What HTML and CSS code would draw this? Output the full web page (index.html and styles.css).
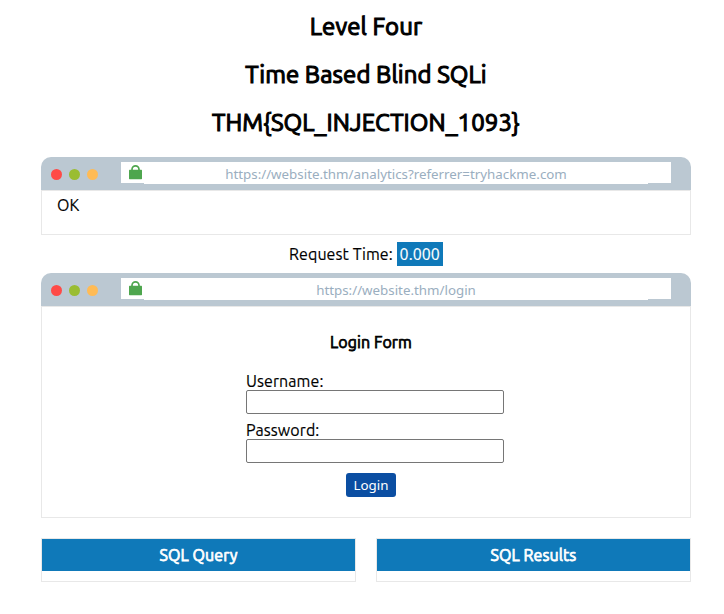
FILE: index.html
```html
<!DOCTYPE html>
<html lang="en">
<head>
<meta charset="utf-8">
<title>Level Four</title>
<link rel="stylesheet" href="styles.css">
</head>
<body>
<main class="page">
  <header class="titles">
    <h1>Level Four</h1>
    <h1>Time Based Blind SQLi</h1>
    <h1>THM{SQL_INJECTION_1093}</h1>
  </header>

  <section class="browser">
    <div class="bar">
      <i class="dot red"></i><i class="dot green"></i><i class="dot amber"></i>
      <div class="address">
        <svg class="lock" viewBox="0 0 13 15"><path d="M3 6V4.4a3.5 3.5 0 0 1 7 0V6" fill="none" stroke="#4ea64e" stroke-width="1.7"/><rect y="4.8" width="13" height="9.4" rx=".6" fill="#4ea64e"/></svg>
        <div class="url">https://website.thm/analytics?referrer=tryhackme.com</div>
      </div>
    </div>
    <div class="view result">OK</div>
  </section>

  <p class="request">Request Time: <span class="time">0.000</span></p>

  <section class="browser">
    <div class="bar">
      <i class="dot red"></i><i class="dot green"></i><i class="dot amber"></i>
      <div class="address">
        <svg class="lock" viewBox="0 0 13 15"><path d="M3 6V4.4a3.5 3.5 0 0 1 7 0V6" fill="none" stroke="#4ea64e" stroke-width="1.7"/><rect y="4.8" width="13" height="9.4" rx=".6" fill="#4ea64e"/></svg>
        <div class="url">https://website.thm/login</div>
      </div>
    </div>
    <div class="view login">
      <form class="form">
        <h2>Login Form</h2>
        <label for="user">Username:</label>
        <input id="user" type="text">
        <label for="pass">Password:</label>
        <input id="pass" type="password">
        <button type="button">Login</button>
      </form>
    </div>
  </section>

  <div class="columns">
    <section class="card"><h3>SQL Query</h3></section>
    <section class="card"><h3>SQL Results</h3></section>
  </div>
</main>
</body>
</html>
```
FILE: styles.css
```css
* { box-sizing: border-box; }

body {
  margin: 0;
  background: #fff;
  color: #000;
  font: 16px/18px "Ubuntu", "Noto Sans", sans-serif;
  letter-spacing: 0.08px;
  -webkit-text-stroke: 0.15px currentColor;
}

.page {
  width: 650px;
  margin-left: 41px;
  padding-top: 13px;
}

.titles {
  display: flex;
  flex-direction: column;
  gap: 20px;
  height: 144px;
  text-align: center;
}

h1, h2, h3, p { margin: 0; }

h1 {
  font-size: 24px;
  font-weight: 400;
  line-height: 28px;
  -webkit-text-stroke: 1.1px currentColor;
}

.bar {
  display: flex;
  align-items: flex-start;
  height: 33px;
  padding: 5px 20px 0 10px;
  border-radius: 10px 10px 0 0;
  background: #bbc8d2;
}

.dot {
  width: 11px;
  height: 11px;
  margin: 7px 7px 0 0;
  border-radius: 50%;
}

.red { background: #ff4a47; }
.green { background: #9abd32; }
.amber { background: #ffbb55; }

.address {
  display: flex;
  width: 550px;
  height: 21px;
  margin-left: 16px;
  padding-left: 8px;
  background: #fff;
}

.lock {
  width: 13px;
  height: 15px;
  margin: 3px 2px 0 0;
}

.url {
  width: 504px;
  height: 22px;
  background: #fff;
  color: #9aaec0;
  font: 13.333px/24px "Noto Sans", sans-serif;
  letter-spacing: 0;
  text-align: center;
  -webkit-text-stroke: 0;
}

.view { border: 1px solid #e8e8e8; }

.result {
  height: 45px;
  padding: 5px 15px;
}

.request {
  height: 38px;
  padding-top: 7px;
  line-height: 24px;
  text-align: center;
}

.time {
  display: inline-block;
  height: 24px;
  padding: 0 3px;
  background: #0f79b9;
  color: #fff;
}

.login { height: 212px; }

.form {
  display: flex;
  flex-direction: column;
  width: 258px;
  margin-left: 204px;
  padding-top: 26px;
}

h2 {
  width: 250px;
  height: 39px;
  font-size: 16px;
  font-weight: 400;
  line-height: 18px;
  text-align: center;
  -webkit-text-stroke: 0.75px currentColor;
}

label { height: 18px; }

input {
  width: 258px;
  height: 24px;
  margin: 0 0 7px;
  border: 1px solid #767676;
  border-radius: 2px;
  background: #fff;
}

button {
  width: 50px;
  height: 24px;
  margin: 3px 0 0 100px;
  padding: 0;
  border: 0;
  border-radius: 3px;
  background: #0b4ea2;
  color: #fff;
  font: 13.333px/24px "Noto Sans", sans-serif;
  letter-spacing: 0;
  -webkit-text-stroke: 0;
}

.columns {
  display: flex;
  gap: 20px;
  padding-top: 20px;
}

.card {
  width: 315px;
  height: 44px;
  border: 1px solid #e8e8e8;
}

h3 {
  height: 32px;
  background: #0f79b9;
  color: #fff;
  font-size: 16px;
  font-weight: 400;
  line-height: 32px;
  text-align: center;
  -webkit-text-stroke: 0.75px currentColor;
}
```
